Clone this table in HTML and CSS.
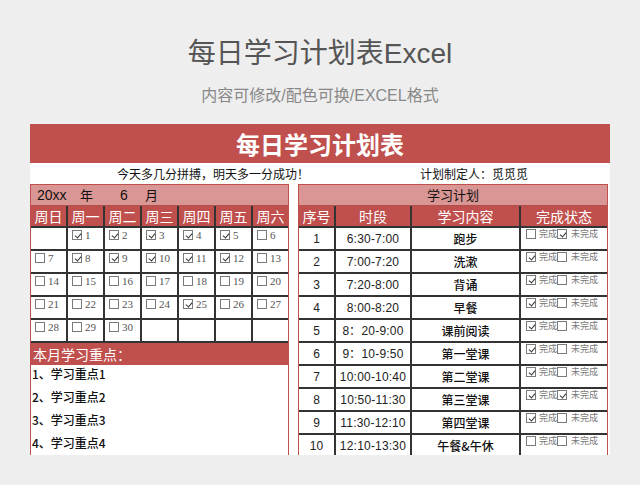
FILE: index.html
```html
<!DOCTYPE html>
<html lang="zh-CN">
<head>
<meta charset="utf-8">
<link rel="stylesheet" href="styles.css">
</head>
<body>
<header class="hero">
  <h1 class="title">每日学习计划表Excel</h1>
  <p class="subtitle">内容可修改/配色可换/EXCEL格式</p>
</header>
<main class="sheet">
  <div class="banner">每日学习计划表</div>
  <div class="motto"><span class="motto-left">今天多几分拼搏，明天多一分成功！</span><span class="motto-right">计划制定人：觅觅觅</span></div>
  <div class="panels">
    <section class="panel">
      <div class="ym"><span class="y">20xx</span><span class="yl">年</span><span class="m">6</span><span class="ml">月</span></div>
      <div class="cal">
        <div class="dh">周日</div><div class="dh">周一</div><div class="dh">周二</div><div class="dh">周三</div><div class="dh">周四</div><div class="dh">周五</div><div class="dh">周六</div>
        <div class="day"></div>
        <div class="day"><i class="cb on"></i><span>1</span></div>
        <div class="day"><i class="cb on"></i><span>2</span></div>
        <div class="day"><i class="cb on"></i><span>3</span></div>
        <div class="day"><i class="cb on"></i><span>4</span></div>
        <div class="day"><i class="cb on"></i><span>5</span></div>
        <div class="day"><i class="cb"></i><span>6</span></div>
        <div class="day"><i class="cb"></i><span>7</span></div>
        <div class="day"><i class="cb on"></i><span>8</span></div>
        <div class="day"><i class="cb on"></i><span>9</span></div>
        <div class="day"><i class="cb on"></i><span>10</span></div>
        <div class="day"><i class="cb on"></i><span>11</span></div>
        <div class="day"><i class="cb on"></i><span>12</span></div>
        <div class="day"><i class="cb"></i><span>13</span></div>
        <div class="day"><i class="cb"></i><span>14</span></div>
        <div class="day"><i class="cb"></i><span>15</span></div>
        <div class="day"><i class="cb"></i><span>16</span></div>
        <div class="day"><i class="cb"></i><span>17</span></div>
        <div class="day"><i class="cb"></i><span>18</span></div>
        <div class="day"><i class="cb"></i><span>19</span></div>
        <div class="day"><i class="cb"></i><span>20</span></div>
        <div class="day"><i class="cb"></i><span>21</span></div>
        <div class="day"><i class="cb"></i><span>22</span></div>
        <div class="day"><i class="cb"></i><span>23</span></div>
        <div class="day"><i class="cb"></i><span>24</span></div>
        <div class="day"><i class="cb on"></i><span>25</span></div>
        <div class="day"><i class="cb"></i><span>26</span></div>
        <div class="day"><i class="cb"></i><span>27</span></div>
        <div class="day"><i class="cb"></i><span>28</span></div>
        <div class="day"><i class="cb"></i><span>29</span></div>
        <div class="day"><i class="cb"></i><span>30</span></div>
        <div class="day"></div>
        <div class="day"></div>
        <div class="day"></div>
        <div class="day"></div>
      </div>
      <div class="focus-head">本月学习重点：</div>
      <ul class="focus">
        <li>1、学习重点1</li>
        <li>2、学习重点2</li>
        <li>3、学习重点3</li>
        <li>4、学习重点4</li>
      </ul>
    </section>
    <section class="panel">
      <div class="plan-title">学习计划</div>
      <div class="plan">
        <div class="ph">序号</div><div class="ph">时段</div><div class="ph">学习内容</div><div class="ph">完成状态</div>

        <div class="pc num">1</div><div class="pc time">6:30-7:00</div><div class="pc task">跑步</div>
        <div class="pc status"><i class="cb"></i><span class="lbl">完成</span><i class="cb on"></i><span class="lbl gap">未完成</span></div>

        <div class="pc num">2</div><div class="pc time">7:00-7:20</div><div class="pc task">洗漱</div>
        <div class="pc status"><i class="cb on"></i><span class="lbl">完成</span><i class="cb"></i><span class="lbl gap">未完成</span></div>

        <div class="pc num">3</div><div class="pc time">7:20-8:00</div><div class="pc task">背诵</div>
        <div class="pc status"><i class="cb on"></i><span class="lbl">完成</span><i class="cb"></i><span class="lbl gap">未完成</span></div>

        <div class="pc num">4</div><div class="pc time">8:00-8:20</div><div class="pc task">早餐</div>
        <div class="pc status"><i class="cb on"></i><span class="lbl">完成</span><i class="cb"></i><span class="lbl gap">未完成</span></div>

        <div class="pc num">5</div><div class="pc time">8：20-9:00</div><div class="pc task">课前阅读</div>
        <div class="pc status"><i class="cb on"></i><span class="lbl">完成</span><i class="cb"></i><span class="lbl gap">未完成</span></div>

        <div class="pc num">6</div><div class="pc time">9：10-9:50</div><div class="pc task">第一堂课</div>
        <div class="pc status"><i class="cb on"></i><span class="lbl">完成</span><i class="cb"></i><span class="lbl gap">未完成</span></div>

        <div class="pc num">7</div><div class="pc time">10:00-10:40</div><div class="pc task">第二堂课</div>
        <div class="pc status"><i class="cb on"></i><span class="lbl">完成</span><i class="cb"></i><span class="lbl gap">未完成</span></div>

        <div class="pc num">8</div><div class="pc time">10:50-11:30</div><div class="pc task">第三堂课</div>
        <div class="pc status"><i class="cb on"></i><span class="lbl">完成</span><i class="cb on"></i><span class="lbl gap">未完成</span></div>

        <div class="pc num">9</div><div class="pc time">11:30-12:10</div><div class="pc task">第四堂课</div>
        <div class="pc status"><i class="cb on"></i><span class="lbl">完成</span><i class="cb"></i><span class="lbl gap">未完成</span></div>

        <div class="pc num">10</div><div class="pc time">12:10-13:30</div><div class="pc task">午餐&amp;午休</div>
        <div class="pc status"><i class="cb"></i><span class="lbl">完成</span><i class="cb"></i><span class="lbl gap">未完成</span></div>
      </div>
    </section>
  </div>
</main>
</body>
</html>
```
FILE: styles.css
```css
* { box-sizing: border-box; }
html, body { margin: 0; padding: 0; }
body {
  background: #eeeeee;
  font-family: "Noto Sans CJK SC", "Liberation Sans", sans-serif;
  color: #111;
  width: 640px;
  height: 485px;
  overflow: hidden;
}
.hero {
  padding-top: 37px;
  text-align: center;
  font-family: "Liberation Sans", "Noto Sans CJK SC", sans-serif;
}
.title {
  margin: 0;
  font-size: 28px;
  line-height: 34px;
  font-weight: normal;
  color: #555;
}
.subtitle {
  margin: 15px 0 0;
  font-size: 16px;
  line-height: 20px;
  color: #888;
}
.sheet {
  margin: 18px 30px 0;
  width: 580px;
  background: #fff;
}
.banner {
  height: 39px;
  background: #c0504d;
  color: #fff;
  font-size: 24px;
  font-weight: bold;
  line-height: 39px;
  text-align: center;
}
.motto {
  height: 21px;
  display: grid;
  grid-template-columns: 390px 1fr;
  font-size: 12px;
  line-height: 22px;
  color: #111;
}
.motto-left { padding-left: 87px; }
.panels {
  display: grid;
  grid-template-columns: 259px 310px;
  column-gap: 9px;
  height: 271px;
  overflow: hidden;
}
.panel {
  border: 1px solid #c0504d;
  border-bottom: none;
  display: flex;
  flex-direction: column;
  min-height: 0;
}
.ym {
  height: 21px;
  background: #da9694;
  border-bottom: 1px solid #b0504c;
  font-size: 13px;
  line-height: 20px;
  padding-left: 6px;
  display: flex;
  color: #111;
}
.ym .y { width: 43px; font-family: "Liberation Sans", sans-serif; font-size: 14px; }
.ym .yl { width: 40px; }
.ym .m { width: 25px; font-family: "Liberation Sans", sans-serif; font-size: 14px; }
.cal {
  display: grid;
  grid-template-columns: repeat(7, 1fr);
  grid-template-rows: 20px;
  grid-auto-rows: 21px;
  gap: 2px;
  background: #333;
  border-bottom: 2px solid #333;
}
.dh {
  background: #c0504d;
  color: #fff;
  font-size: 14px;
  line-height: 20px;
  text-align: center;
}
.day {
  background: #fff;
  display: flex;
  align-items: flex-start;
  gap: 3px;
  padding: 2px 0 0 4px;
  font-family: "Liberation Serif", serif;
  font-size: 11px;
  line-height: 11px;
  color: #555;
}
.cb {
  position: relative;
  flex: none;
  display: inline-block;
  width: 10px;
  height: 10px;
  border: 1px solid #7a7a7a;
  background: #fff;
}
.cb.on::after {
  content: "";
  position: absolute;
  left: 2.5px;
  top: 0.5px;
  width: 3px;
  height: 5px;
  border-right: 1.3px solid #333;
  border-bottom: 1.3px solid #333;
  transform: rotate(40deg);
}
.focus-head {
  height: 22px;
  background: #c0504d;
  color: #fff;
  font-size: 14px;
  line-height: 22px;
  padding-left: 2px;
}
.focus {
  list-style: none;
  margin: 0;
  padding: 0 0 0 1px;
}
.focus li {
  height: 23px;
  line-height: 18px;
  font-size: 12px;
  font-weight: 500;
  color: #111;
}
.plan-title {
  height: 21px;
  background: #da9694;
  border-bottom: 1px solid #b0504c;
  font-size: 13px;
  line-height: 20px;
  text-align: center;
  color: #111;
}
.plan {
  display: grid;
  grid-template-columns: 35px 74px 107px 86px;
  grid-template-rows: 20px;
  grid-auto-rows: 21px;
  gap: 2px;
  background: #333;
}
.ph {
  background: #c0504d;
  color: #fff;
  font-size: 14px;
  line-height: 20px;
  text-align: center;
}
.pc {
  background: #fff;
  text-align: center;
  line-height: 22px;
  color: #222;
}
.num, .time {
  font-family: "Liberation Sans", sans-serif;
  font-size: 12px;
}
.time { letter-spacing: 0.2px; }
.task {
  font-size: 12px;
  font-weight: 500;
  color: #111;
}
.status {
  display: flex;
  align-items: flex-start;
  padding: 1px 0 0 5px;
  line-height: 10px;
}
.lbl {
  font-size: 9px;
  line-height: 10px;
  color: #777;
  margin-left: 3px;
}
.lbl.gap { margin-left: 4px; }
```
